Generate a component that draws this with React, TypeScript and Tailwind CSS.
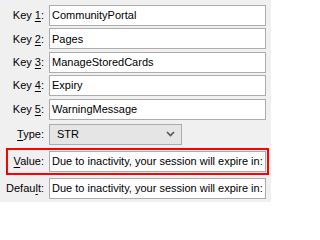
import React from "react";

type Field = {
  pre: string;
  key: string;
  post: string;
  value: string;
};

const keys: Field[] = [
  { pre: "Key ", key: "1", post: ":", value: "CommunityPortal" },
  { pre: "Key ", key: "2", post: ":", value: "Pages" },
  { pre: "Key ", key: "3", post: ":", value: "ManageStoredCards" },
  { pre: "Key ", key: "4", post: ":", value: "Expiry" },
  { pre: "Key ", key: "5", post: ":", value: "WarningMessage" },
];

const message = "Due to inactivity, your session will expire in:";

function Label({ pre, k, post }: { pre: string; k: string; post: string }) {
  return (
    <div className="w-[44px] shrink-0 text-right whitespace-nowrap">
      {pre}
      <span className="underline underline-offset-2">{k}</span>
      {post}
    </div>
  );
}

function TextBox({ value }: { value: string }) {
  return (
    <div className="flex h-[21px] w-[217px] shrink-0 items-center overflow-hidden whitespace-nowrap border border-[#acacac] bg-white pl-[2px]">
      {value}
    </div>
  );
}

export default function App() {
  return (
    <div
      className="h-[202px] w-[271px] overflow-hidden bg-[#f0f0f0] pt-[5px] text-[11px] text-black"
      style={{ fontFamily: "'Liberation Sans', Arial, sans-serif" }}
    >
      <div className="flex flex-col gap-[2.4px]">
        {keys.map((f) => (
          <div key={f.key} className="flex items-center gap-[5px]">
            <Label pre={f.pre} k={f.key} post={f.post} />
            <TextBox value={f.value} />
          </div>
        ))}
      </div>

      <div className="mt-[4px] flex items-center gap-[5px]">
        <Label pre="" k="T" post="ype:" />
        <div className="flex h-[21px] w-[133px] items-center justify-between border border-[#acacac] bg-[#e5e5e5] pl-[7px] pr-[6px]">
          <span>STR</span>
          <svg width="9" height="6" viewBox="0 0 9 6">
            <path d="M1 1 L4.5 4.5 L8 1" fill="none" stroke="#555" strokeWidth="1.6" />
          </svg>
        </div>
      </div>

      <div className="ml-[6px] mt-[3px] flex w-[263px] items-center gap-[5px] border-2 border-[#ff0000] py-px">
        <div className="-ml-[8px] flex">
          <Label pre="" k="V" post="alue:" />
        </div>
        <TextBox value={message} />
      </div>

      <div className="mt-[3px] flex items-center gap-[5px]">
        <Label pre="Defau" k="l" post="t:" />
        <TextBox value={message} />
      </div>
    </div>
  );
}
